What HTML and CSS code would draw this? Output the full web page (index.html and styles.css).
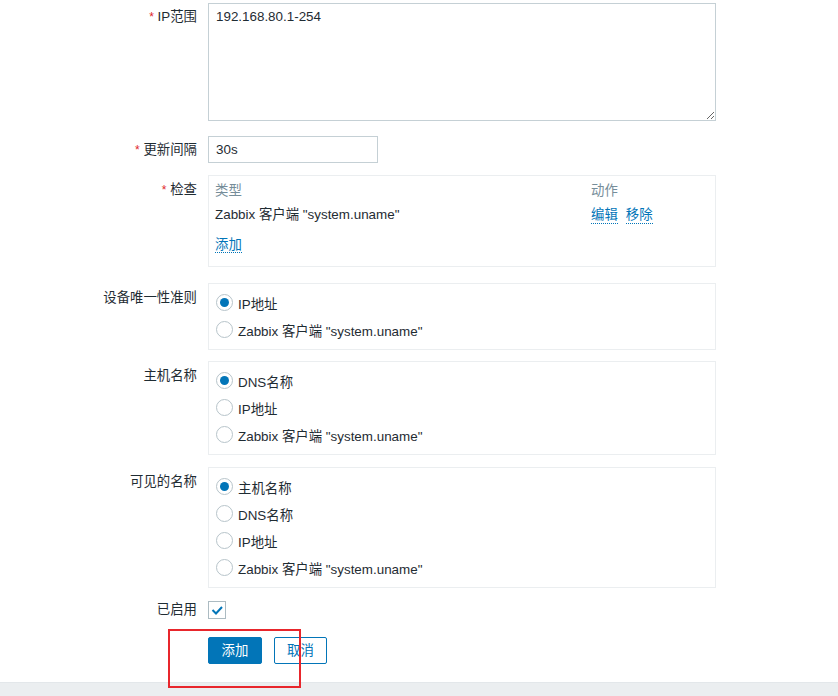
FILE: index.html
```html
<!DOCTYPE html>
<html lang="zh">
<head>
<meta charset="utf-8">
<title>发现规则</title>
<link rel="stylesheet" href="styles.css">
</head>
<body>
<div class="page">
  <div class="form">
    <div class="row row-ip">
      <div class="lbl"><span class="ast">*</span> IP范围</div>
      <div class="ctl"><textarea class="ta">192.168.80.1-254</textarea></div>
    </div>
    <div class="row row-delay">
      <div class="lbl"><span class="ast">*</span> 更新间隔</div>
      <div class="ctl"><div class="inp">30s</div></div>
    </div>
    <div class="row row-checks">
      <div class="lbl"><span class="ast">*</span> 检查</div>
      <div class="ctl">
        <div class="box box-checks">
          <div class="tbl">
            <div class="th">类型</div><div class="th">动作</div>
            <div class="td">Zabbix 客户端 "system.uname"</div>
            <div class="td actions"><span class="link">编辑</span><span class="link">移除</span></div>
          </div>
          <div class="addrow"><span class="link">添加</span></div>
        </div>
      </div>
    </div>
    <div class="row row-uniq">
      <div class="lbl">设备唯一性准则</div>
      <div class="ctl">
        <div class="box">
          <div class="opt"><span class="radio on"></span>IP地址</div>
          <div class="opt"><span class="radio"></span>Zabbix 客户端 "system.uname"</div>
        </div>
      </div>
    </div>
    <div class="row row-host">
      <div class="lbl">主机名称</div>
      <div class="ctl">
        <div class="box">
          <div class="opt"><span class="radio on"></span>DNS名称</div>
          <div class="opt"><span class="radio"></span>IP地址</div>
          <div class="opt"><span class="radio"></span>Zabbix 客户端 "system.uname"</div>
        </div>
      </div>
    </div>
    <div class="row row-visible">
      <div class="lbl">可见的名称</div>
      <div class="ctl">
        <div class="box">
          <div class="opt"><span class="radio on"></span>主机名称</div>
          <div class="opt"><span class="radio"></span>DNS名称</div>
          <div class="opt"><span class="radio"></span>IP地址</div>
          <div class="opt"><span class="radio"></span>Zabbix 客户端 "system.uname"</div>
        </div>
      </div>
    </div>
    <div class="row row-enabled">
      <div class="lbl lbl-mid">已启用</div>
      <div class="ctl">
        <span class="chk"><svg width="16" height="16" viewBox="0 0 16 16"><polyline points="3.5,8 7,11.5 13,5" fill="none" stroke="#0275b8" stroke-width="2"/></svg></span>
      </div>
    </div>
    <div class="row row-buttons">
      <div class="lbl"></div>
      <div class="ctl btns">
        <span class="btn btn-main">添加</span>
        <span class="btn btn-alt">取消</span>
      </div>
    </div>
  </div>
  <div class="band"></div>
  <div class="annot"></div>
</div>
</body>
</html>
```
FILE: styles.css
```css
html, body {
  margin: 0;
  padding: 0;
  background: #ffffff;
  overflow: hidden;
}
body {
  font-family: "Liberation Sans", "Noto Sans CJK SC", sans-serif;
  font-size: 13.4px;
  color: #1f2c33;
}
.page {
  position: relative;
  width: 838px;
  height: 696px;
}
.form {
  padding-top: 3px;
}
.row {
  display: grid;
  grid-template-columns: 197px 508px;
  column-gap: 11px;
  align-items: start;
}
.row-delay { margin-top: 15px; align-items: center; }
.row-checks { margin-top: 12px; }
.row-uniq { margin-top: 16px; }
.row-host { margin-top: 11px; }
.row-visible { margin-top: 12px; }
.row-enabled { margin-top: 13px; align-items: center; }
.row-buttons { margin-top: 18px; }
.lbl {
  text-align: right;
  line-height: 18px;
  padding-top: 6px;
  white-space: nowrap;
}
.row-ip .lbl { padding-top: 5px; }
.row-delay .lbl, .lbl-mid { padding-top: 0; }
.ast {
  color: #e0262b;
  font-size: 12px;
}
.ta {
  display: block;
  box-sizing: border-box;
  width: 508px;
  height: 118px;
  margin: 0;
  border: 1px solid #c5d0d5;
  padding: 4px 7px;
  font-family: inherit;
  font-size: inherit;
  line-height: 18px;
  color: #1f2c33;
  background: #fff;
  resize: vertical;
  outline: none;
}
.inp {
  box-sizing: border-box;
  width: 170px;
  height: 27px;
  border: 1px solid #c5d0d5;
  padding: 0 7px;
  line-height: 25px;
}
.box {
  box-sizing: border-box;
  width: 508px;
  border: 1px solid #ebeef0;
  padding: 5px 7px 6px;
}
.box-checks {
  padding: 3px 6px 9px;
}
.tbl {
  display: grid;
  grid-template-columns: 376px 1fr;
}
.th {
  color: #768d99;
  line-height: 24px;
}
.td {
  line-height: 24px;
}
.actions {
  display: flex;
  align-items: center;
  gap: 8px;
  height: 24px;
}
.link {
  color: #0275b8;
  border-bottom: 1px dotted #0275b8;
  line-height: 17px;
  cursor: pointer;
}
.addrow {
  margin-top: 6px;
  line-height: 24px;
}
.opt {
  display: flex;
  align-items: center;
  height: 27px;
}
.radio {
  box-sizing: border-box;
  width: 17px;
  height: 17px;
  border: 1px solid #b7c4ca;
  border-radius: 50%;
  margin-right: 5px;
  display: flex;
  align-items: center;
  justify-content: center;
  background: #fff;
}
.radio.on::after {
  content: "";
  width: 9px;
  height: 9px;
  border-radius: 50%;
  background: #0275b8;
}
.chk {
  box-sizing: border-box;
  width: 18px;
  height: 18px;
  border: 1px solid #acbbc2;
  display: flex;
  align-items: center;
  justify-content: center;
  background: #fff;
}
.btns {
  display: flex;
  gap: 12px;
}
.btn {
  box-sizing: border-box;
  height: 27px;
  line-height: 25px;
  padding: 0 12px;
  border: 1px solid #0275b8;
  border-radius: 2px;
  text-align: center;
}
.btn-main {
  width: 54px;
  background: #0275b8;
  color: #ffffff;
}
.btn-alt {
  width: 53px;
  background: #ffffff;
  color: #0275b8;
}
.band {
  margin-top: 18px;
  height: 40px;
  background: #ebeef0;
  border-top: 1px solid #e3e7ea;
}
.annot {
  position: absolute;
  left: 168px;
  top: 629px;
  width: 133px;
  height: 59px;
  box-sizing: border-box;
  border: 2px solid #e8262c;
  pointer-events: none;
}
```
